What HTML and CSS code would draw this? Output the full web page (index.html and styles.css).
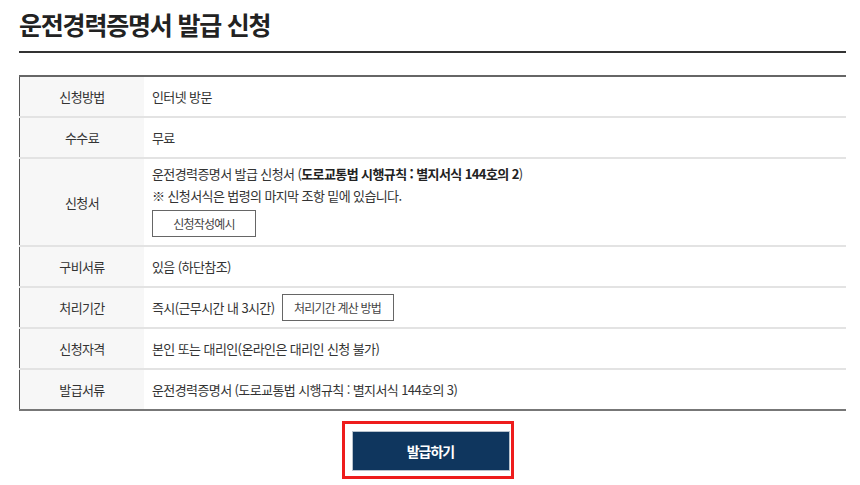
FILE: index.html
```html
<!DOCTYPE html>
<html lang="ko">
<head>
    <meta charset="UTF-8">
    <meta name="viewport" content="width=device-width, initial-scale=1.0">
    <title>운전경력증명서 발급 신청</title>
    <link rel="stylesheet" href="styles.css">
</head>
<body>

<div class="wrap">
    <h2 class="page-title">운전경력증명서 발급 신청</h2>

    <table class="info-table">
        <tr>
            <th>신청방법</th>
            <td>인터넷 방문</td>
        </tr>
        <tr>
            <th>수수료</th>
            <td>무료</td>
        </tr>
        <tr class="tall">
            <th>신청서</th>
            <td>
                <p>운전경력증명서 발급 신청서 (<strong>도로교통법 시행규칙 : 별지서식 144호의 2</strong>)</p>
                <p>※ 신청서식은 법령의 마지막 조항 밑에 있습니다.</p>
                <button type="button" class="btn-line btn-example">신청작성예시</button>
            </td>
        </tr>
        <tr>
            <th>구비서류</th>
            <td>있음 (하단참조)</td>
        </tr>
        <tr>
            <th>처리기간</th>
            <td>즉시(근무시간 내 3시간) <button type="button" class="btn-line btn-calc">처리기간 계산 방법</button></td>
        </tr>
        <tr>
            <th>신청자격</th>
            <td>본인 또는 대리인(온라인은 대리인 신청 불가)</td>
        </tr>
        <tr>
            <th>발급서류</th>
            <td>운전경력증명서 (도로교통법 시행규칙 : 별지서식 144호의 3)</td>
        </tr>
    </table>

    <div class="submit-area">
        <div class="highlight">
            <button type="button" class="btn-submit">발급하기</button>
        </div>
    </div>
</div>

</body>
</html>
```

FILE: styles.css
```css
body {
    margin: 0;
    font-family: "Noto Sans CJK KR", "Noto Sans", sans-serif;
    color: #333;
    background-color: #fff;
}

.wrap {
    width: 827px;
    margin-left: 19px;
}

.page-title {
    margin: 0;
    padding-top: 6px;
    padding-bottom: 9px;
    font-size: 25px;
    font-weight: 700;
    letter-spacing: -1.2px;
    line-height: 36px;
    color: #222;
    border-bottom: 2px solid #333;
}

.info-table {
    width: 100%;
    margin-top: 22px;
    border-collapse: collapse;
    border-top: 2px solid #666;
    border-bottom: 2px solid #777;
    border-left: 1px solid #555;
    font-size: 13px;
    letter-spacing: -0.6px;
}

.info-table th,
.info-table td {
    height: 39px;
    padding: 0;
    border-top: 2px solid #e3e3e3;
}

.info-table tr:first-child th,
.info-table tr:first-child td {
    border-top: none;
}

.info-table th {
    width: 124px;
    background-color: #f7f7f7;
    font-weight: 400;
    color: #333;
    text-align: center;
}

.info-table td {
    padding-left: 8px;
    color: #333;
}

.info-table tr.tall td {
    height: 78px;
    padding-top: 2px;
    padding-bottom: 6px;
}

.info-table p {
    margin: 0;
    line-height: 22px;
}

.info-table strong {
    font-weight: 700;
    color: #222;
}

.btn-line {
    font-family: inherit;
    font-size: 12px;
    letter-spacing: -0.8px;
    color: #444;
    background-color: #fff;
    border: 1px solid #666;
    padding: 0;
    height: 27px;
    cursor: pointer;
}

.btn-example {
    width: 104px;
    margin-top: 3px;
}

.btn-calc {
    width: 112px;
    margin-left: 4px;
}

.submit-area {
    display: flex;
    justify-content: center;
    margin-top: 10px;
    padding-right: 10px;
}

.highlight {
    border: 3px solid #ee1c1c;
    padding: 7px 1px 5px 7px;
}

.btn-submit {
    display: block;
    width: 158px;
    height: 40px;
    font-family: inherit;
    font-size: 14px;
    font-weight: 700;
    letter-spacing: -1px;
    color: #fff;
    background-color: #0f365e;
    border: 1px solid #b8c2cc;
    cursor: pointer;
}
```
